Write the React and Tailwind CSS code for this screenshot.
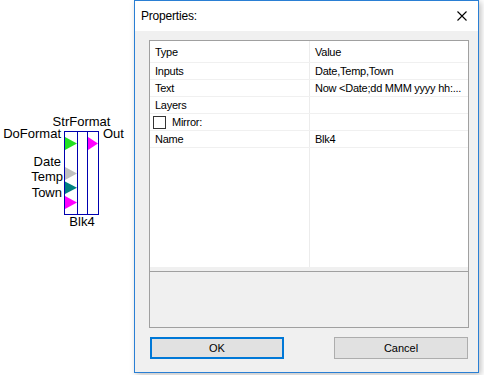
import React from "react";

function Canvas() {
  return (
    <svg className="absolute left-0 top-0" width="134" height="240" viewBox="0 0 134 240">
      <g fontFamily="'Liberation Sans', Arial, sans-serif" fontSize="13" fill="#000">
        <text x="81.5" y="126" textAnchor="middle">StrFormat</text>
        <text x="61" y="138" textAnchor="end">DoFormat</text>
        <text x="103" y="138">Out</text>
        <text x="61" y="166" textAnchor="end">Date</text>
        <text x="63" y="181" textAnchor="end">Temp</text>
        <text x="62" y="197" textAnchor="end">Town</text>
        <text x="82" y="226" textAnchor="middle">Blk4</text>
      </g>
      <polygon points="65,137 65,150 77,143.5" fill="#22e022" />
      <polygon points="88,137 88,150 98,143.5" fill="#ff00ff" />
      <polygon points="65,167 65,180 77,173.5" fill="#c0c0c0" />
      <polygon points="65,181.5 65,194 77,187.75" fill="#008080" />
      <polygon points="65,196 65,209 77,202.5" fill="#ff00ff" />
      <g stroke="#0000b0" strokeWidth="1" fill="none" shapeRendering="crispEdges">
        <rect x="64.5" y="131.5" width="34" height="83" />
        <line x1="77.5" y1="131.5" x2="77.5" y2="214.5" />
        <line x1="87.5" y1="131.5" x2="87.5" y2="214.5" />
      </g>
    </svg>
  );
}

const rows = [
  { k: "Inputs", v: "Date,Temp,Town" },
  { k: "Text", v: "Now <Date;dd MMM yyyy hh:..." },
  { k: "Layers", v: "" },
  { k: "Mirror:", v: "", check: true },
  { k: "Name", v: "Blk4" },
];

export default function App() {
  return (
    <div className="relative w-[484px] h-[375px] bg-white overflow-hidden font-['Liberation_Sans',Arial,sans-serif] text-black">
      <Canvas />
      <div className="absolute left-[134px] top-0 w-[345px] h-[373px] border border-[#2a7fd4] bg-[#f0f0f0] shadow-[2px_2px_6px_rgba(0,0,0,0.25)] flex flex-col">
        <div className="h-[30px] bg-white flex items-center justify-between pl-[6px] pr-[11px]">
          <span className="text-[12px] tracking-[-0.2px]">Properties:</span>
          <svg width="10" height="10" viewBox="0 0 10 10">
            <path d="M0.5 0.5 L9.5 9.5 M9.5 0.5 L0.5 9.5" stroke="#000" strokeWidth="1.1" />
          </svg>
        </div>
        <div className="flex-1 flex flex-col pl-[14px] pr-[8px] pt-[9px]">
          <div className="w-[320px] h-[288px] border border-[#a0a0a0] bg-[#f0f0f0] flex flex-col">
            <div className="h-[226px] bg-white flex flex-col text-[11px] tracking-[-0.25px] whitespace-nowrap">
              <div className="h-[22px] flex items-center border-b border-[#f0f0f0]">
                <div className="w-[159px] pl-[5px] pt-[1px]">Type</div>
                <div className="flex-1 min-w-0 pl-[5px] pt-[1px] border-l border-[#ececec] h-full flex items-center">Value</div>
              </div>
              {rows.map((r) => (
                <div key={r.k} className="h-[17px] flex items-center border-b border-[#f0f0f0]">
                  <div className="w-[159px] pl-[5px] flex items-center">
                    {r.check && (
                      <span className="w-[13px] h-[13px] border border-[#333] bg-white mr-[6px] -ml-[2px]" />
                    )}
                    <span>{r.k}</span>
                  </div>
                  <div className="flex-1 min-w-0 overflow-hidden pl-[5px] h-full flex items-center border-l border-[#ececec]">{r.v}</div>
                </div>
              ))}
              <div className="flex-1 flex">
                <div className="w-[159px]" />
                <div className="flex-1 border-l border-[#ececec]" />
              </div>
            </div>
            <div className="h-[4px]" />
            <div className="flex-1 border-t border-[#a0a0a0]" />
          </div>
          <div className="flex justify-between mt-[9px] w-[320px] pl-[1px] pr-[1px] text-[11px]">
            <button className="w-[134px] h-[22px] bg-[#e1e1e1] border-2 border-[#0078d7] flex items-center justify-center">OK</button>
            <button className="w-[134px] h-[22px] bg-[#e1e1e1] border border-[#adadad] flex items-center justify-center">Cancel</button>
          </div>
        </div>
      </div>
    </div>
  );
}
